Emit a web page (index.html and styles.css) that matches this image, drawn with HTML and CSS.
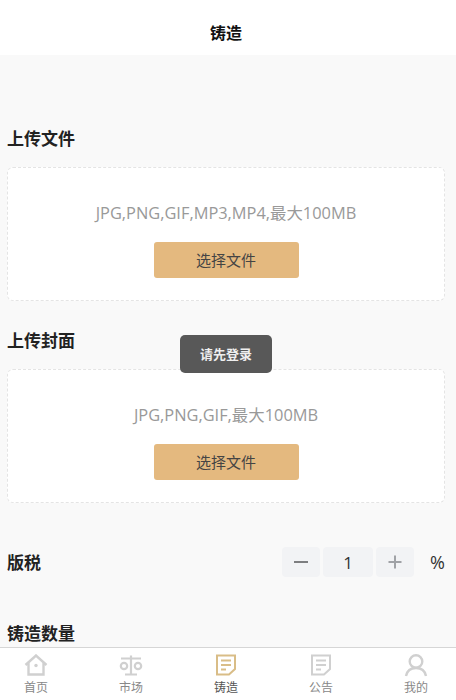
FILE: index.html
```html
<!DOCTYPE html>
<html>
    <head>
        <title>铸造</title>
        <link rel="stylesheet" href="styles.css">
    </head>
    <body>
        <header class="top-bar">铸造</header>
        <main class="content">
            <h2 class="section-title first">上传文件</h2>
            <div class="upload-box">
                <p class="upload-hint">JPG,PNG,GIF,MP3,MP4,最大100MB</p>
                <button class="upload-btn">选择文件</button>
            </div>

            <h2 class="section-title">上传封面</h2>
            <div class="upload-box">
                <p class="upload-hint">JPG,PNG,GIF,最大100MB</p>
                <button class="upload-btn">选择文件</button>
            </div>

            <div class="royalty-row">
                <h2 class="row-title">版税</h2>
                <div class="stepper">
                    <span class="step-btn">
                        <svg width="16" height="16" viewBox="0 0 16 16"><path d="M1 8h14" stroke="#7d7e80" stroke-width="2"/></svg>
                    </span>
                    <span class="step-value">1</span>
                    <span class="step-btn">
                        <svg width="16" height="16" viewBox="0 0 16 16"><path d="M1.500 8h13M8 1.500v13" stroke="#a0a2a6" stroke-width="2"/></svg>
                    </span>
                    <span class="step-unit">%</span>
                </div>
            </div>

            <h2 class="section-title count-title">铸造数量</h2>
        </main>

        <div class="toast">请先登录</div>

        <!-- bottom tabs -->
        <nav class="tab-bar">
            <div class="tab">
                <svg class="tab-icon" viewBox="0 0 24 24" fill="none" stroke="#d0d0d0" stroke-width="2.400">
                    <path d="M1.500 11 12 1.500 22.500 11M4.500 9V20.500h15V9"/>
                    <circle cx="12" cy="11.500" r="1.700" fill="#d0d0d0" stroke="none"/>
                </svg>
                <span>首页</span>
            </div>
            <div class="tab">
                <svg class="tab-icon" viewBox="0 0 24 24" fill="none" stroke="#d0d0d0" stroke-width="2.200">
                    <path d="M2 4.500h20M12 1.500v18M6 20.500h12"/>
                    <circle cx="5" cy="12" r="3.200"/>
                    <circle cx="19" cy="12" r="3.200"/>
                </svg>
                <span>市场</span>
            </div>
            <div class="tab active">
                <svg class="tab-icon" viewBox="0 0 24 24" fill="none" stroke="#d9bd87" stroke-width="2">
                    <path d="M15 20.500H3v-19h18V15z"/>
                    <path d="M7 6.500h10M7 11h10M7 15.500h5"/>
                </svg>
                <span>铸造</span>
            </div>
            <div class="tab">
                <svg class="tab-icon" viewBox="0 0 24 24" fill="none" stroke="#d0d0d0" stroke-width="2">
                    <path d="M15 20.500H3v-19h18V15z"/>
                    <path d="M7 6.500h10M7 11h10M7 15.500h5"/>
                </svg>
                <span>公告</span>
            </div>
            <div class="tab">
                <svg class="tab-icon" viewBox="0 0 24 24" fill="none" stroke="#d0d0d0" stroke-width="2.400">
                    <circle cx="12" cy="7.500" r="6.300"/>
                    <path d="M2 22c1-5 4.500-8 10-8s9 3 10 8"/>
                </svg>
                <span>我的</span>
            </div>
        </nav>
    </body>
</html>
```

FILE: styles.css
```css
html,
body {
    margin: 0;
    padding: 0;
}

body {
    position: relative;
    height: 700px;
    overflow: hidden;
    background-color: #f9f9f9;
    font-family: "Open Sans", "Noto Sans CJK SC", sans-serif;
    color: #222;
}

.top-bar {
    height: 55px;
    padding: 22px 4px 0 0;
    box-sizing: border-box;
    background-color: #fff;
    text-align: center;
    font-size: 16px;
    line-height: 22px;
    font-weight: 700;
    color: #111;
}

.content {
    padding: 0 11px 0 7px;
}

.section-title,
.row-title {
    margin: 0;
    font-size: 17px;
    line-height: 24px;
    font-weight: 700;
    color: #222;
}

.section-title {
    padding-top: 28px;
    padding-bottom: 16px;
}

.section-title.first {
    padding-top: 72px;
}

.upload-box {
    height: 134px;
    box-sizing: border-box;
    padding-top: 34px;
    background-color: #fff;
    border: 1px dashed #e4e4e4;
    border-radius: 6px;
    text-align: center;
}

.upload-hint {
    margin: 0 0 18px;
    font-size: 16.400px;
    line-height: 22px;
    color: #999;
}

.upload-btn {
    display: block;
    width: 145px;
    height: 36px;
    margin: 0 auto;
    padding: 0 0 2px;
    border: none;
    border-radius: 3px;
    background-color: #e4b97f;
    font-family: inherit;
    font-size: 15px;
    color: #444;
}

.royalty-row {
    display: flex;
    justify-content: space-between;
    align-items: center;
    height: 30px;
    margin-top: 44px;
}

.row-title {
    padding-top: 2px;
}

.stepper {
    display: flex;
    align-items: center;
    gap: 3px;
}

.step-btn,
.step-value {
    display: flex;
    align-items: center;
    justify-content: center;
    height: 30px;
    background-color: #f2f3f5;
    border-radius: 4px;
}

.step-btn {
    width: 38px;
}

.step-value {
    width: 50px;
    font-size: 17px;
    color: #323233;
}

.step-unit {
    width: 28px;
    text-align: right;
    font-size: 18px;
    color: #333;
}

.count-title {
    padding-top: 45px;
}

/* toast sits over the page */
.toast {
    position: absolute;
    left: 180px;
    top: 335px;
    width: 92px;
    height: 38px;
    background-color: #585858;
    border-radius: 5px;
    text-align: center;
    font-size: 13px;
    line-height: 38px;
    font-weight: 700;
    color: #eee;
}

/* tabs are wider than the page, centred on 226 */
.tab-bar {
    position: absolute;
    left: 0;
    right: 0;
    bottom: 0;
    display: flex;
    justify-content: center;
    height: 52px;
    padding-right: 4px;
    background-color: #fff;
    border-top: 1px solid #d6d6d6;
}

.tab {
    flex: 0 0 95px;
    display: flex;
    flex-direction: column;
    align-items: center;
    padding-top: 6px;
    font-size: 12px;
    line-height: 16px;
    color: #888;
}

.tab.active {
    color: #555;
}

.tab-icon {
    width: 24px;
    height: 24px;
    margin-bottom: 2px;
}
```
